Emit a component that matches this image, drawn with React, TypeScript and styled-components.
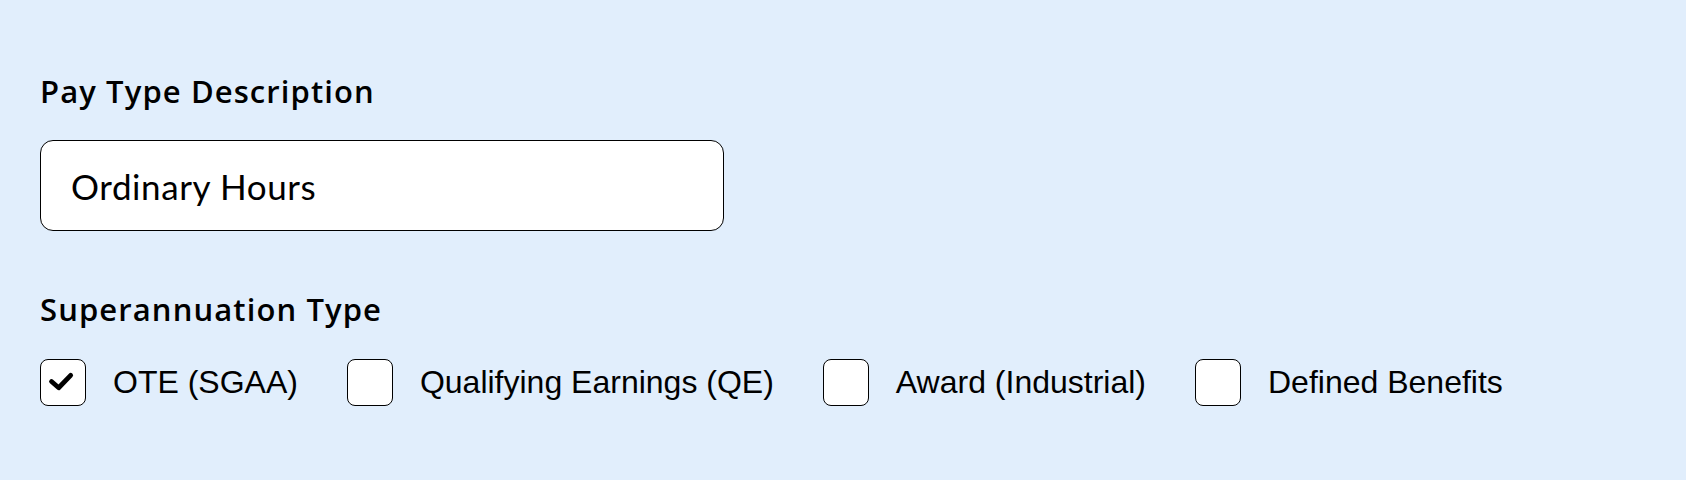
import React, { useState } from 'react';
import styled, { createGlobalStyle } from 'styled-components';

const GlobalStyle = createGlobalStyle`
  html, body {
    margin: 0;
    padding: 0;
    background: #e1eefc;
  }
`;

const superTypes = [
  { id: 'ote', label: 'OTE (SGAA)', checked: true },
  { id: 'qe', label: 'Qualifying Earnings (QE)', checked: false },
  { id: 'award', label: 'Award (Industrial)', checked: false },
  { id: 'db', label: 'Defined Benefits', checked: false },
];

const Page = styled.div`
  min-height: 480px;
  box-sizing: border-box;
  padding: 73px 40px 0 40px;
  background: #e1eefc;
  color: #000;
`;

const Heading = styled.h2`
  margin: 0;
  font-family: 'Open Sans', 'Noto Sans', sans-serif;
  font-weight: 600;
  font-size: 31px;
  line-height: 36px;
  letter-spacing: 1.1px;
`;

const TextInput = styled.input`
  display: block;
  box-sizing: border-box;
  width: 684px;
  height: 91px;
  margin: 31px 0 60px 0;
  padding: 0 30px;
  border: 1.5px solid #000;
  border-radius: 13px;
  background: #fff;
  font-family: Lato, 'Noto Sans', sans-serif;
  font-size: 35px;
  letter-spacing: 0.6px;
  color: #000;
  outline: none;
`;

const OptionRow = styled.div`
  display: flex;
  align-items: center;
  gap: 49px;
  margin-top: 32px;
`;

const Option = styled.label`
  display: flex;
  align-items: center;
  gap: 27px;
  cursor: pointer;
`;

const Box = styled.span<{ $checked: boolean }>`
  display: flex;
  align-items: center;
  justify-content: center;
  box-sizing: border-box;
  width: 46px;
  height: 47px;
  border: 1.5px solid #000;
  border-radius: 8px;
  background: #fff;
`;

const OptionText = styled.span`
  font-family: 'Liberation Sans', Arial, sans-serif;
  font-size: 32px;
  line-height: 47px;
  color: #000;
`;

const Check = () => (
  <svg width="46" height="47" viewBox="0 0 46 47">
    <path
      d="M12.5 24 L20 30.5 L32.5 17.5"
      fill="none"
      stroke="#000"
      strokeWidth="5"
      strokeLinecap="round"
      strokeLinejoin="round"
      transform="translate(-1.5 -1.5)"
    />
  </svg>
);

export default function App() {
  const [checked, setChecked] = useState<Record<string, boolean>>(
    Object.fromEntries(superTypes.map(t => [t.id, t.checked]))
  );

  return (
    <Page>
      <GlobalStyle />
      <Heading>Pay Type Description</Heading>
      <TextInput defaultValue="Ordinary Hours" />
      <Heading>Superannuation Type</Heading>
      <OptionRow>
        {superTypes.map(t => (
          <Option key={t.id} onClick={() => setChecked(c => ({ ...c, [t.id]: !c[t.id] }))}>
            <Box $checked={checked[t.id]}>{checked[t.id] && <Check />}</Box>
            <OptionText>{t.label}</OptionText>
          </Option>
        ))}
      </OptionRow>
    </Page>
  );
}
